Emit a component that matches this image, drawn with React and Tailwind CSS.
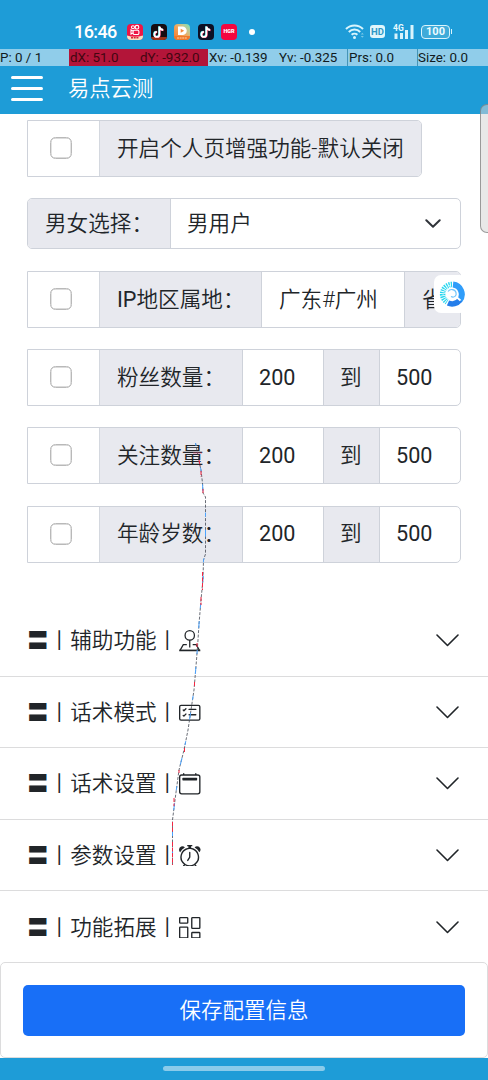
import { BsAlarm, BsCalendar2, BsCardChecklist, BsColumnsGap } from "react-icons/bs";

const ranges = [
  { id: "fans", label: "粉丝数量：", from: "200", to: "500" },
  { id: "follows", label: "关注数量：", from: "200", to: "500" },
  { id: "age", label: "年龄岁数：", from: "200", to: "500" },
];

const sections = [
  { title: "辅助功能", Icon: StandIcon },
  { title: "话术模式", Icon: BsCardChecklist },
  { title: "话术设置", Icon: BsCalendar2 },
  { title: "参数设置", Icon: BsAlarm },
  { title: "功能拓展", Icon: BsColumnsGap },
];

function StandIcon({ className }) {
  return (
    <svg className={className} viewBox="0 0 22 22" fill="none" stroke="currentColor">
      <circle cx="11" cy="5.5" r="4.8" strokeWidth="1.3" />
      <path d="M11 10.3v7.7" strokeWidth="1.3" />
      <path d="M8 15H4.4L1.2 20.6M14 15h3.6l3.2 5.6" strokeWidth="1.3" />
      <path d="M.2 20.9h21.6" strokeWidth="1.7" />
    </svg>
  );
}

function NoteIcon() {
  const note = "M8.4 2.6v7.8a2.5 2.5 0 1 1-2.5-2.5M8.4 2.6c.3 2.2 1.6 3.2 3.8 3.4";
  return (
    <svg className="absolute inset-0 size-full" viewBox="0 0 16 16" fill="none" strokeWidth="1.8">
      <path d={note} stroke="#2be4e4" transform="translate(-.4 -.3)" />
      <path d={note} stroke="#f52c5c" transform="translate(.4 .3)" />
      <path d={note} stroke="#fff" />
    </svg>
  );
}

function StatusBar() {
  return (
    <div className="flex h-[49px] items-center pt-[14px] pl-[74px] text-white">
      <span className="w-[53px] text-[18px] leading-none font-medium tracking-[-0.6px]">16:46</span>
      <div className="flex gap-[7.5px]">
        <span className="relative size-4 overflow-hidden rounded-[4px] bg-[#ee1645]">
          <svg className="size-4" viewBox="0 0 16 16" fill="none" stroke="#fff" strokeWidth="1.1">
            <circle cx="6" cy="3.3" r="1.5" />
            <circle cx="10" cy="3.2" r="1.8" />
            <rect x="6.1" y="6.2" width="5.8" height="4.3" rx="1.3" />
            <path d="m6 7-2-1v4l2-1" />
            <path d="M0 11.5q8 2.5 16 0V16H0Z" fill="#f5e3c4" stroke="none" />
            <path d="M4 13.8h8" stroke="#d82235" strokeWidth="1.5" strokeDasharray="2 .7" />
          </svg>
        </span>
        <span className="relative size-4 overflow-hidden rounded-[4px] bg-[#160c10]">
          <span className="absolute inset-x-0 bottom-0 h-[3px] bg-[#9b3217]" />
          <NoteIcon />
        </span>
        <span className="relative size-4 overflow-hidden rounded-[4px] bg-linear-to-bl from-[#55e5c4] via-[#f3a65b] to-[#f37425]">
          <svg className="size-4" viewBox="0 0 16 16">
            <path d="M4 2.5h4.5a4 4 0 0 1 0 8.5H4Z" fill="#fff" />
            <path d="m6.7 4.8 3.5 2-3.5 2Z" fill="#f48b3d" />
            <path d="M0 12h16v4H0Z" fill="#ef792b" />
            <path d="M3 14h10" stroke="#ffd1a3" strokeDasharray="2 .6" />
          </svg>
        </span>
        <span className="relative size-4 overflow-hidden rounded-[4px] bg-[#0d1024]">
          <NoteIcon />
        </span>
        <span className="flex size-4 items-center justify-center rounded-[4px] bg-[#f4063f] text-[5.5px] leading-none font-black">
          HGR
        </span>
      </div>
      <span className="ml-[12px] size-[6px] rounded-full bg-white" />
      <div className="ml-[90px] flex items-center">
        <svg className="h-[17px] w-[20px]" viewBox="0 0 20 17" fill="none" stroke="#d9f4fc">
          <path d="M1 6a12 12 0 0 1 17 0M3.8 9a8 8 0 0 1 11.4 0M6.6 11.8a4.2 4.2 0 0 1 5.8 0" strokeWidth="2" />
          <circle cx="9.5" cy="14.6" r="1.5" fill="#d9f4fc" stroke="none" />
          <path d="m15.8 11.5 1.5-1.7 1.5 1.7ZM15.8 13l1.5 1.7 1.5-1.7Z" fill="#79c8e8" stroke="none" />
        </svg>
        <span className="ml-[5px] flex h-[13px] w-[15px] items-center justify-center rounded-[3px] bg-[#dff6fc] text-[9.5px] leading-none font-bold text-[#2d98c6]">
          HD
        </span>
        <div className="relative ml-[8px] h-[16px] w-[21px]">
          <span className="absolute top-0 left-0 text-[8.5px] leading-[8px] font-bold text-[#e8fafe]">4G</span>
          <svg className="size-full" viewBox="0 0 21 16" fill="#d9f4fc">
            <path d="M1.5 9.5h3V15h-3zM7 9h3v6H7zM12 6h3v9h-3zM17.5 1h3v14h-3z" />
          </svg>
        </div>
        <div className="ml-[7px] flex h-[14px] w-[29px] items-center justify-center rounded-[4px] border border-[#d9f4fc] bg-[#3fabd9] text-[11px] leading-none font-bold text-[#eefbff]">
          100
        </div>
        <span className="ml-px h-[5px] w-px bg-[#d9f4fc]" />
      </div>
    </div>
  );
}

function PointerBar() {
  return (
    <div className="flex h-[17px] bg-[#90cdea] text-[13.4px] leading-[18px] whitespace-nowrap text-[#101a20]">
      <span className="w-[69px]">P: 0 / 1</span>
      <span className="w-[70px] bg-[#b31539] pl-px text-[#430611]">dX: 51.0</span>
      <span className="w-[69px] bg-[#b31539] pl-px text-[#430611]">dY: -932.0</span>
      <span className="w-[70px] pl-px">Xv: -0.139</span>
      <span className="w-[69px] pl-px">Yv: -0.325</span>
      <span className="w-[70px] border-l border-[#4495b7] pl-px">Prs: 0.0</span>
      <span className="w-[71px] border-l border-[#4495b7]">Size: 0.0</span>
    </div>
  );
}

function CheckCell() {
  return (
    <div className="flex w-[71px] shrink-0 items-center pb-px pl-[22px]">
      <span className="size-[22px] rounded-[5.5px] border border-[#b9b9b9] bg-white shadow-[inset_0_0_0_0.4px_#b9b9b9]" />
    </div>
  );
}

function RangeRow({ label, from, to }) {
  return (
    <div className="flex h-[57px] overflow-hidden rounded-r-[5px] border border-[#ced2da]">
      <CheckCell />
      <span className="flex w-[143px] items-center border-l border-[#d4d8df] bg-[#e8e9ef] pl-[17px]">{label}</span>
      <span className="flex w-[81px] items-center border-l border-[#ced2da] pl-[16px] font-normal">{from}</span>
      <span className="flex w-[56px] items-center border-l border-[#ced2da] bg-[#e8e9ef] pl-[16px]">到</span>
      <span className="flex flex-1 items-center border-l border-[#ced2da] pl-[16px] font-normal">{to}</span>
    </div>
  );
}

// finger trail drawn by the pointer debug layer
function TouchTrail() {
  const trail =
    "M195.5 443 199 461 201 470 202.5 483 203 493 205.5 497V554L203.5 560 203 579 201 600 199 624 198 640 196.5 660 194 690 188 730 184 750 179 770 175 800 172.5 820V865";
  return (
    <svg className="pointer-events-none absolute top-0 left-0 h-[1080px] w-[488px]" viewBox="0 0 488 1080" fill="none">
      <path d={trail} stroke="#454a55" strokeWidth="0.8" strokeDasharray="3 1.5" />
      <path d={trail} stroke="#4aa3ff" strokeWidth="1" strokeDasharray="7 22 4 13" strokeDashoffset="4" />
      <path
        d="m199 460 1 6M201 471v6M203 489v5M202.5 572v18M201 597v8M197 643v5M194.5 682v4M184.5 748v4M179 770v3M174 798v8M172.5 822v10M172.5 842v23"
        stroke="#f52643"
        strokeDasharray="4 1.5"
      />
      <path d="M193 453h9" stroke="#e4456b" strokeWidth="0.6" />
    </svg>
  );
}

function FloatingBall() {
  return (
    <div className="absolute top-[275px] left-[434px] flex h-[38px] w-[33px] items-center justify-center rounded-[7px] bg-white">
      <svg className="ml-[3px] h-[26px] w-[26px]" viewBox="0 0 26 26" fill="none">
        <path d="M14 3.5A9.8 9.8 0 0 1 20.5 19.5" stroke="#309dfa" strokeWidth="6" />
        <path d="M21 19A10 10 0 0 1 9 22" stroke="#257eea" strokeWidth="5.5" />
        <path d="M13 3.5A9.5 9.5 0 0 0 8 21" stroke="#27d6ef" strokeWidth="5.5" strokeDasharray="1.2 .9" />
        <path d="M11 6.5A7 7 0 0 0 7 17" stroke="#fff" strokeWidth="1" strokeDasharray="1 1.5" />
        <path d="M11 4.5A9 9 0 0 0 4.5 16" stroke="#e7fdff" strokeWidth="1" strokeDasharray="1 2" />
        <path d="m15 14 6.5 5.5" stroke="#fff" strokeWidth="1.8" />
        <path d="M9 10.5c2-3 7-2.5 8 1s-2 5.5-5 4" stroke="#71c4fb" strokeWidth="1.2" />
      </svg>
    </div>
  );
}

export default function App() {
  return (
    <div className="relative flex h-[1080px] w-[488px] flex-col overflow-hidden bg-white font-[Roboto,'Noto_Sans_CJK_SC_DemiLight','Noto_Sans_CJK_SC',sans-serif] text-[#212529]">
      <header className="h-[114px] shrink-0 bg-[#1e9cd7]">
        <StatusBar />
        <PointerBar />
        <div className="flex h-[45px] items-center pl-[11px] text-white">
          <div className="flex w-8 flex-col gap-[8.5px]">
            <span className="h-[2.5px] rounded-full bg-white" />
            <span className="h-[2.5px] rounded-full bg-white" />
            <span className="h-[2.5px] rounded-full bg-white" />
          </div>
          <h1 className="ml-[25px] text-[21.3px] leading-none font-[350]">易点云测</h1>
        </div>
      </header>

      <main className="flex h-[491px] shrink-0 flex-col pt-[6px] pr-[27px] pl-[27px] text-[21.6px] leading-none font-[350] whitespace-nowrap">
        <div className="flex h-[57px] w-[395px] overflow-hidden rounded-r-[5px] border border-[#ced2da]">
          <CheckCell />
          <span className="flex flex-1 items-center border-l border-[#d4d8df] bg-[#e8e9ef] pl-[17px]">
            开启个人页增强功能-默认关闭
          </span>
        </div>

        <div className="mt-[21px] flex h-[51px] overflow-hidden rounded-[5px] border border-[#ced2da]">
          <span className="flex w-[142px] items-center bg-[#e8e9ef] pl-[17px]">男女选择：</span>
          <div className="flex flex-1 items-center justify-between border-l border-[#ced2da] pr-[19px] pl-[16px]">
            男用户
            <svg className="h-[10px] w-[16px]" viewBox="0 0 16 10" fill="none" stroke="#30343a" strokeWidth="2">
              <path d="m1.3 1.3 6.7 6.5 6.7-6.5" strokeLinecap="round" strokeLinejoin="round" />
            </svg>
          </div>
        </div>

        <div className="mt-[22px] flex h-[57px] overflow-hidden rounded-r-[5px] border border-[#ced2da]">
          <CheckCell />
          <span className="flex w-[162px] items-center border-l border-[#d4d8df] bg-[#e8e9ef] pl-[17px]">
            <span className="font-normal">IP</span>地区属地：
          </span>
          <span className="flex w-[143px] items-center border-l border-[#ced2da] pl-[17px]">广东#广州</span>
          <span className="flex flex-1 items-center border-l border-[#ced2da] bg-[#e8e9ef] pl-[17px]">省</span>
        </div>

        <div className="mt-[21px] flex flex-col gap-[21.4px]">
          {ranges.map(({ id, ...range }) => (
            <RangeRow key={id} {...range} />
          ))}
        </div>
      </main>

      <section className="h-[357px] shrink-0">
        {sections.map(({ title, Icon }) => (
          <div
            key={title}
            className="flex h-[71.6px] items-center border-b border-[#dcdcdd] pt-px pr-[29px] pl-[27px] text-[21.6px] leading-none font-[350] last:border-b-0"
          >
            <span>〓丨{title}丨</span>
            <Icon className="ml-px size-[21.5px]" />
            <svg className="ml-auto h-[13px] w-[23px]" viewBox="0 0 23 13" fill="none" stroke="#212529" strokeWidth="1.6">
              <path d="m1 1 10.5 10.5L22 1" strokeLinecap="round" strokeLinejoin="round" />
            </svg>
          </div>
        ))}
      </section>

      <div className="h-24 shrink-0 rounded-[5px] border border-[#dcdcdd] bg-white px-[22px] pt-[22px]">
        <button className="flex h-[51px] w-full items-center justify-center rounded-[5px] bg-[#186ff7] pt-px text-[21.5px] leading-none font-[350] text-white">
          保存配置信息
        </button>
      </div>

      <footer className="flex h-[22px] shrink-0 justify-center bg-[#1e9cd7] pt-2">
        <span className="h-[5px] w-[162px] rounded-full bg-[#8acbea]" />
      </footer>

      <div className="absolute top-[104px] left-[480px] h-[129px] w-3 rounded-l-[7px] border border-[#777]/70 bg-[#d5d5d5]/55" />
      <FloatingBall />
      <TouchTrail />
    </div>
  );
}
